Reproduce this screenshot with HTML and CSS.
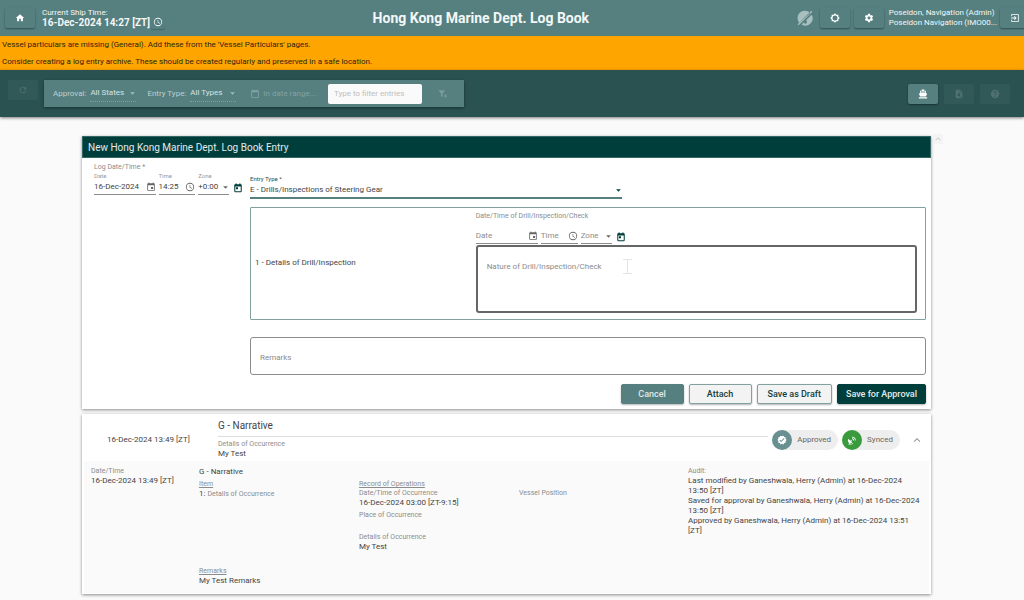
FILE: index.html
```html
<!DOCTYPE html>
<html lang="en">
<head>
<meta charset="utf-8">
<title>Hong Kong Marine Dept. Log Book</title>
<meta name="viewport" content="width=device-width, initial-scale=1">
<link rel="stylesheet" href="styles.css">
</head>
<body>
<svg class="sprite" aria-hidden="true">
  <symbol id="home" viewBox="0 0 24 24"><path d="M10 20v-6h4v6h5v-8h3L12 3 2 12h3v8z"/></symbol>
  <symbol id="clock" viewBox="0 0 24 24"><path d="M12 2a10 10 0 1 0 0 20 10 10 0 0 0 0-20zm0 18a8 8 0 1 1 0-16 8 8 0 0 1 0 16zm.5-13H11v6l5.2 3.2.8-1.3-4.5-2.7z"/></symbol>
  <symbol id="offline" viewBox="0 0 24 24"><path d="M12 1A11 11 0 0 0 3.500 19L20 4.500A11 11 0 0 0 12 1zM22 7l-8 8 1 4-3 2-2-2.500L7 22A11 11 0 0 0 22 7zM21.500 1 23 2.500 2.500 23 1 21.500z"/></symbol>
  <symbol id="bright" viewBox="0 0 24 24"><path d="M20 15.310 23.310 12 20 8.690V4h-4.690L12 .69 8.690 4H4v4.690L.69 12 4 15.310V20h4.690L12 23.310 15.310 20H20zM12 18a6 6 0 1 1 0-12 6 6 0 0 1 0 12z"/></symbol>
  <symbol id="gear" viewBox="0 0 24 24"><path d="M19.430 12.980c.04-.32.07-.64.07-.98s-.03-.66-.07-.98l2.110-1.650c.19-.15.24-.42.12-.64l-2-3.460c-.12-.22-.39-.3-.61-.22l-2.490 1c-.52-.4-1.080-.73-1.690-.98l-.38-2.650C14.460 2.180 14.250 2 14 2h-4c-.25 0-.46.18-.49.42l-.38 2.650c-.61.25-1.170.59-1.690.98l-2.490-1c-.23-.09-.49 0-.61.22l-2 3.460c-.13.22-.07.49.12.64l2.110 1.650c-.04.32-.07.65-.07.98s.03.66.07.98l-2.110 1.650c-.19.15-.24.42-.12.64l2 3.460c.12.22.39.3.61.22l2.490-1c.52.4 1.080.73 1.690.98l.38 2.650c.03.24.24.42.49.42h4c.25 0 .46-.18.49-.42l.38-2.650c.61-.25 1.170-.59 1.690-.98l2.490 1c.23.09.49 0 .61-.22l2-3.460c.12-.22.07-.49-.12-.64zM12 15.500a3.500 3.500 0 1 1 0-7 3.500 3.500 0 0 1 0 7z"/></symbol>
  <symbol id="exit" viewBox="0 0 24 24"><path d="M3 3h18v18H3v-5h2v3h14V5H5v3H3zM3 11h9L9.500 8.500 11 7l5 5-5 5-1.500-1.500L12 13H3z"/></symbol>
  <symbol id="refresh" viewBox="0 0 24 24"><path d="M17.650 6.350A8 8 0 1 0 19.730 14h-2.080A6 6 0 1 1 12 6c1.660 0 3.140.69 4.220 1.780L13 11h7V4z"/></symbol>
  <symbol id="calendar" viewBox="0 0 24 24"><path d="M17 12h-5v5h5zM16 1v2H8V1H6v2H5a2 2 0 0 0-2 2v14c0 1.100.9 2 2 2h14a2 2 0 0 0 2-2V5a2 2 0 0 0-2-2h-1V1zm3 18H5V8h14z"/></symbol>
  <symbol id="today" viewBox="0 0 24 24"><path d="M19 3h-1V1h-3v2H9V1H6v2H5a2 2 0 0 0-2 2v15c0 1.100.9 2 2 2h14a2 2 0 0 0 2-2V5a2 2 0 0 0-2-2zm-.5 16.500h-13V8.500h13zM7 10h5v5H7z"/></symbol>
  <symbol id="range" viewBox="0 0 24 24"><path d="M19 3h-1V1h-2v2H8V1H6v2H5a2 2 0 0 0-2 2v14c0 1.100.9 2 2 2h14a2 2 0 0 0 2-2V5a2 2 0 0 0-2-2zm0 16H5V8h14z"/></symbol>
  <symbol id="filter" viewBox="0 0 24 24"><path d="M1 3h16l-6 8v9l-4-3v-6zM14 14l1.500-1.500 2.500 2.500 2.500-2.500L22 14l-2.500 2.500L22 19l-1.500 1.500L18 18l-2.500 2.500L14 19l2.500-2.500z"/></symbol>
  <symbol id="boat" viewBox="0 0 24 24"><path d="M9 1h6v3h4v6l3 1-3 7H5l-3-7 3-1V4h4zM7 6v3l5-1.500L17 9V6zM2 20h20v3H2z"/></symbol>
  <symbol id="file" viewBox="0 0 24 24"><path d="M14 2H6a2 2 0 0 0-2 2v16c0 1.100.9 2 2 2h12a2 2 0 0 0 2-2V8zm-1 2 5 5h-5zM9 11h4a3 3 0 0 1 1 5l3 3-1 1-4-3H9z" fill-rule="evenodd"/></symbol>
  <symbol id="help" viewBox="0 0 24 24"><path fill-rule="evenodd" d="M12 2a10 10 0 1 0 0 20 10 10 0 0 0 0-20zm1 17h-2v-2h2zm2-7.700-.9.900c-.7.700-1.100 1.300-1.100 2.800h-2v-.5c0-1.100.4-2.100 1.200-2.800l1.200-1.300A2 2 0 1 0 10 9H8a4 4 0 1 1 7 2.300z"/></symbol>
  <symbol id="verified" viewBox="0 0 24 24"><path fill-rule="evenodd" d="m23 12-2.400-2.800.3-3.700-3.600-.8-1.900-3.200L12 3 8.600 1.500 6.700 4.700l-3.600.8.300 3.700L1 12l2.400 2.800-.3 3.700 3.600.8 1.900 3.200L12 21l3.400 1.500 1.900-3.200 3.600-.8-.3-3.700zm-13 5-4-4 1.500-1.500L10 14l6.600-6.600L18 9z"/></symbol>
  <symbol id="satellite" viewBox="0 0 24 24"><path d="M3 9a9 9 0 0 0 12 12l-5-5 2-2-2-2-2 2zM5 20h8v3H3zM12 8a5 5 0 0 1 5 5h-2a3 3 0 0 0-3-3zM12 4a9 9 0 0 1 9 9h-2a7 7 0 0 0-7-7z"/></symbol>
  <symbol id="up" viewBox="0 0 24 24"><path d="m12 7-8 8 1.800 1.800 6.200-6.200 6.200 6.200L20 15z"/></symbol>
  <symbol id="down" viewBox="0 0 24 24"><path d="m4 8 8 8 8-8z"/></symbol>
</svg>

<header class="topbar">
  <button class="tile" aria-label="Home"><svg><use href="#home"/></svg></button>
  <div class="ship-time">
    <span>Current Ship Time:</span>
    <strong>16-Dec-2024 14:27 [ZT]</strong>
  </div>
  <button class="clock-btn" aria-label="Set clock"><svg><use href="#clock"/></svg></button>
  <h1>Hong Kong Marine Dept. Log Book</h1>
  <svg class="offline"><use href="#offline"/></svg>
  <button class="tile" aria-label="Brightness"><svg><use href="#bright"/></svg></button>
  <button class="tile" aria-label="Settings"><svg><use href="#gear"/></svg></button>
  <div class="user"><span>Poseidon, Navigation (Admin)</span><span>Poseidon Navigation (IMO00...</span></div>
  <button class="tile tile-exit" aria-label="Log out"><svg><use href="#exit"/></svg></button>
</header>

<div class="alerts" role="status">
  <p>Vessel particulars are missing (General). Add these from the 'Vessel Particulars' pages.</p>
  <p>Consider creating a log entry archive. These should be created regularly and preserved in a safe location.</p>
</div>

<nav class="toolbar">
  <button class="tile faded refresh" aria-label="Refresh"><svg><use href="#refresh"/></svg></button>
  <div class="filters">
    <label for="approval">Approval:</label>
    <span class="dotted"><select id="approval"><option>All States</option></select><svg><use href="#down"/></svg></span>
    <label class="second" for="type">Entry Type:</label>
    <span class="dotted"><select id="type"><option>All Types</option></select><svg><use href="#down"/></svg></span>
    <button class="range"><svg><use href="#range"/></svg>In date range...</button>
    <input class="search" type="text" placeholder="Type to filter entries" aria-label="Filter entries">
    <button class="tile clear" aria-label="Clear filters"><svg><use href="#filter"/></svg></button>
  </div>
  <div class="tools">
    <button class="tile solid" aria-label="Vessel"><svg><use href="#boat"/></svg></button>
    <button class="tile faded" aria-label="Report"><svg><use href="#file"/></svg></button>
    <button class="tile faded" aria-label="Help"><svg><use href="#help"/></svg></button>
  </div>
</nav>

<main>
  <form class="card new-entry">
    <h2>New Hong Kong Marine Dept. Log Book Entry</h2>
    <button class="corner" type="button" aria-label="Scroll to top"><svg><use href="#up"/></svg></button>
    <div class="form-body">
      <div class="log-date">
        <p class="caption">Log Date/Time *</p>
        <div class="when">
          <div class="field f-date"><label for="d1">Date</label><div class="line"><input id="d1" type="text" value="16-Dec-2024"><svg><use href="#calendar"/></svg></div></div>
          <div class="field f-time"><label for="t1">Time</label><div class="line"><input id="t1" type="text" value="14:25"><svg><use href="#clock"/></svg></div></div>
          <div class="field f-zone"><label for="z1">Zone</label><div class="line"><select id="z1"><option>+0:00</option></select><svg class="arrow"><use href="#down"/></svg></div></div>
          <button class="now" type="button" aria-label="Now"><svg><use href="#today"/></svg></button>
        </div>
      </div>
      <div class="entry">
        <div class="field entry-type"><label for="et">Entry Type *</label><div class="line"><select id="et"><option>E - Drills/Inspections of Steering Gear</option></select><svg class="arrow"><use href="#down"/></svg></div></div>
        <section class="item">
          <p class="item-name">1 - Details of Drill/Inspection</p>
          <div class="item-fields">
            <p class="caption">Date/Time of Drill/Inspection/Check</p>
            <div class="when">
              <div class="field f-date"><div class="line"><input type="text" placeholder="Date" aria-label="Date"><svg><use href="#calendar"/></svg></div></div>
              <div class="field f-time"><div class="line"><input type="text" placeholder="Time" aria-label="Time"><svg><use href="#clock"/></svg></div></div>
              <div class="field f-zone"><div class="line"><select class="empty" aria-label="Zone"><option>Zone</option></select><svg class="arrow"><use href="#down"/></svg></div></div>
              <button class="now" type="button" aria-label="Now"><svg><use href="#today"/></svg></button>
            </div>
            <textarea class="nature" placeholder="Nature of Drill/Inspection/Check" aria-label="Nature of Drill/Inspection/Check"></textarea>
            <svg class="caret" viewBox="0 0 9 15"><path d="M0 .5h9M0 14.500h9M4.500 0v15"/></svg>
          </div>
        </section>
        <textarea class="remarks" placeholder="Remarks" aria-label="Remarks"></textarea>
        <div class="actions">
          <button class="btn mid" type="button">Cancel</button>
          <button class="btn" type="button">Attach</button>
          <button class="btn" type="button">Save as Draft</button>
          <button class="btn dark" type="button">Save for Approval</button>
        </div>
      </div>
    </div>
  </form>

  <article class="card log">
    <header class="log-head">
      <time>16-Dec-2024 13:49 [ZT]</time>
      <div class="summary">
        <h3>G - Narrative</h3>
        <p class="caption">Details of Occurrence</p>
        <p>My Test</p>
      </div>
      <span class="chip"><i><svg><use href="#verified"/></svg></i>Approved</span>
      <span class="chip green"><i><svg><use href="#satellite"/></svg></i>Synced</span>
      <button class="collapse" aria-label="Collapse"><svg><use href="#up"/></svg></button>
    </header>
    <div class="details">
      <div class="stamp"><p class="caption">Date/Time</p><p>16-Dec-2024 13:49 [ZT]</p></div>
      <div class="content">
        <p class="kind">G - Narrative</p>
        <div class="record">
          <div><p class="caption under">Item</p><p>1: <span class="caption">Details of Occurrence</span></p></div>
          <div class="ops">
            <p class="caption under">Record of Operations</p>
            <p class="caption">Date/Time of Occurrence</p>
            <p>16-Dec-2024 03:00 [ZT-9:15]</p>
            <p class="caption place">Place of Occurrence</p>
            <p class="caption">Details of Occurrence</p>
            <p>My Test</p>
          </div>
          <p class="caption position">Vessel Position</p>
        </div>
        <p class="caption under">Remarks</p>
        <p>My Test Remarks</p>
      </div>
      <div class="audit">
        <p class="caption">Audit:</p>
        <p>Last modified by Ganeshwala, Herry (Admin) at 16-Dec-2024 13:50 [ZT]</p>
        <p>Saved for approval by Ganeshwala, Herry (Admin) at 16-Dec-2024 13:50 [ZT]</p>
        <p>Approved by Ganeshwala, Herry (Admin) at 16-Dec-2024 13:51 [ZT]</p>
      </div>
    </div>
  </article>
</main>
</body>
</html>
```

FILE: styles.css
```css
* { box-sizing: border-box; }

body {
  margin: 0;
  background: #fafafa;
  color: #444;
  font: 8px/10px Roboto, "Liberation Sans", sans-serif;
}

h1, h2, h3, p { margin: 0; font-weight: 400; }

button, input, select, textarea {
  margin: 0;
  padding: 0;
  border: 0;
  border-radius: 0;
  background: none;
  color: inherit;
  font: inherit;
  appearance: none;
}

svg { display: block; flex: none; width: 10px; height: 10px; fill: currentColor; }
.sprite { position: absolute; width: 0; height: 0; }

.tile {
  display: flex;
  flex: none;
  align-items: center;
  justify-content: center;
  width: 30px;
  height: 20px;
  border-radius: 2px;
  color: #fff;
  box-shadow: 0 1px 2px rgba(0, 0, 0, .4);
}
.tile.solid { background: #568080; }
.tile.faded { background: #315958; color: #4f716f; box-shadow: none; }

.topbar {
  display: flex;
  align-items: center;
  height: 36px;
  padding-left: 5px;
  overflow: hidden;
  background: #568080;
  color: #f3f7f7;
}
.ship-time { display: flex; flex-direction: column; margin: 0 1px 0 7px; white-space: nowrap; }
.ship-time strong { font-size: 10px; font-weight: 700; }
.clock-btn {
  display: flex;
  align-self: flex-end;
  margin-bottom: 7px;
  padding: 2px;
  border-radius: 2px;
  box-shadow: 0 1px 1px rgba(0, 0, 0, .2);
}
.topbar h1 { flex: 1; font-size: 14px; line-height: 16px; font-weight: 700; text-align: center; }
.offline { width: 16px; height: 16px; margin-right: 7px; color: #a9bfbf; }
.topbar .tile + .tile { margin-left: 4px; }
.user { display: flex; flex-direction: column; margin: 0 3px 0 5px; white-space: nowrap; }
.tile-exit { margin-right: -6px; }

.alerts {
  display: flex;
  flex-direction: column;
  gap: 7px;
  padding: 4px 2px 3px;
  background: #ffa500;
  color: #2e2410;
}

.toolbar {
  display: flex;
  align-items: center;
  padding: 10px 14px 10px 8px;
  background: #295251;
  box-shadow: 0 1px 3px rgba(0, 0, 0, .5);
}
.refresh { align-self: flex-start; }
.filters {
  display: flex;
  align-items: center;
  height: 27px;
  margin-left: 6px;
  padding: 0 6px 0 9px;
  background: #568080;
  color: #bfcfcf;
  box-shadow: 0 1px 3px rgba(0, 0, 0, .4);
}
.filters .second { margin-left: 11px; }
.dotted { display: flex; align-items: center; margin-left: 4px; padding: 3px 0; border-bottom: 1px dotted #7d9f9f; color: #d5e0e0; }
.dotted select { width: 39px; }
.dotted svg { width: 7px; height: 7px; color: #a5bcbc; }
.range { display: flex; align-items: center; gap: 3px; margin-left: 14px; color: #82a2a2; white-space: nowrap; }
.search { width: 94px; height: 20px; margin-left: 12px; padding: 0 6px; border-radius: 2px; background: #fafafa; }
.search::placeholder { color: #bdbdbd; }
.clear { margin-left: 6px; color: #7b9c9c; box-shadow: none; }
.tools { display: flex; gap: 6px; margin-left: auto; }

main { display: flex; flex-direction: column; gap: 5px; padding: 19px 93px 6px 82px; }
.card { background: #fff; box-shadow: 0 1px 3px rgba(0, 0, 0, .45); }

.new-entry { position: relative; }
.new-entry h2 {
  padding: 5px 5px 3px;
  border: 1px solid #356765;
  background: #003e3c;
  color: #e3eaea;
  font-size: 10px;
  line-height: 12px;
}
.corner { position: absolute; top: -2px; left: 100%; display: flex; margin-left: 2px; padding: 1px; background: #f4f4f4; color: #ccc; }
.corner svg { width: 8px; height: 8px; }

.caption { color: #8c8c8c; font-size: 7px; line-height: 9px; }
.under { text-decoration: underline; }

.form-body { display: flex; gap: 7px; padding: 5px 5px 5px 12px; }
.log-date { flex: none; width: 149px; }
.when { display: flex; align-items: flex-end; gap: 3px; }
.field label { display: block; color: #9a9a9a; font-size: 6px; line-height: 8px; }
.line { display: flex; align-items: center; height: 15px; border-bottom: 1px solid #8c8c8c; }
.line input, .line select { flex: 1; width: 0; min-width: 0; }
.line svg { color: #666; }
.line .arrow { width: 7px; height: 7px; }
.line input::placeholder, .empty { color: #8c8c8c; }
.f-date { width: 62px; }
.f-time { width: 37px; }
.f-zone { width: 31px; }
.now { margin: 0 0 2px 1px; color: #003e3c; }

.entry { flex: 1; min-width: 0; }
.entry-type { width: 55%; margin-top: 12px; }
.entry-type label { color: #295251; }
.entry-type .line { height: 16px; border-bottom: 2px solid #568080; }
.entry-type .arrow { color: #003e3c; }
.item {
  display: grid;
  grid-template-columns: 1fr 2fr;
  align-items: center;
  margin-top: 8px;
  padding: 4px 8px 6px 4px;
  border: 1px solid #81a09f;
  border-radius: 1px;
}
.item-fields { position: relative; }
.item-fields .when { margin: 8px 0 1px; }
.nature, .remarks { display: block; width: 100%; border-radius: 3px; resize: none; }
.nature { height: 68px; padding: 15px 9px; border: 2px solid #666; }
.remarks { height: 38px; margin-top: 17px; padding: 15px 9px 12px; border: 1px solid #8c8c8c; }
.nature::placeholder, .remarks::placeholder { color: #8c8c8c; }
.caret { position: absolute; top: 47px; left: 147px; width: 9px; height: 15px; fill: none; stroke: #e4e4e4; }

.actions { display: flex; justify-content: flex-end; gap: 5px; margin-top: 9px; }
.btn {
  min-width: 63px;
  height: 20px;
  padding: 0 10px;
  border: 1px solid #81a09f;
  border-radius: 2px;
  background: #f3f3f3;
  color: #12403e;
  font-size: 9px;
  font-weight: 500;
  box-shadow: 0 1px 2px rgba(0, 0, 0, .3);
}
.btn.mid { background: #568080; border-color: #568080; color: #dfe9e9; }
.btn.dark { padding: 0 8px; background: #003e3c; border-color: #003e3c; color: #e3eaea; }

.log-head { display: flex; align-items: center; padding: 6px 9px 2px 25px; }
.log-head time { width: 111px; flex: none; }
.summary { flex: 1; }
.summary h3 { margin-bottom: 3px; padding-bottom: 4px; border-bottom: 1px solid #ddd; font-size: 10px; line-height: 12px; }
.chip {
  display: flex;
  align-items: center;
  gap: 5px;
  height: 20px;
  margin-left: 4px;
  padding-right: 7px;
  border-radius: 10px;
  background: #eee;
  color: #666;
}
.chip i { display: flex; align-items: center; justify-content: center; width: 20px; height: 20px; border-radius: 50%; background: #689090; color: #fff; }
.chip.green i { background: #3a9b3d; }
.collapse { margin-left: 12px; color: #999; }

.details {
  display: flex;
  margin: 0 2px 1px;
  padding: 6px 8px 7px 7px;
  background: #fafafa;
}
.stamp { flex: none; width: 108px; }
.content { flex: 1; }
.kind { margin-bottom: 3px; }
.record { display: grid; grid-template-columns: 160px 160px 1fr; margin-bottom: 15px; }
.place { margin: 3px 0 13px; }
.position { margin-top: 9px; }
.audit { flex: none; width: 233px; }
```
